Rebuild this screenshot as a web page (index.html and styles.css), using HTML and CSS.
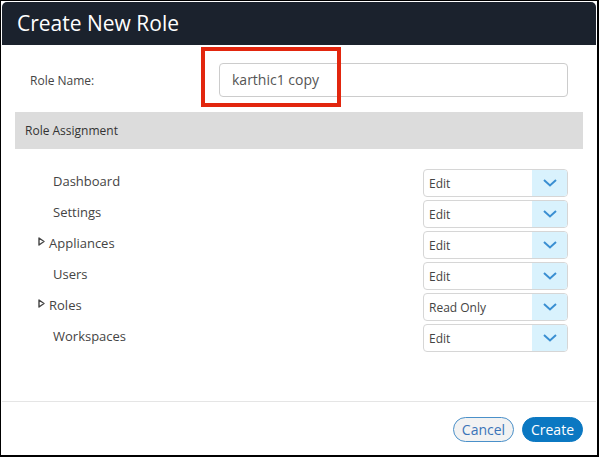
FILE: index.html
```html
<!DOCTYPE html>
<html>
<head>
<meta charset="utf-8">
<link rel="stylesheet" href="styles.css">
</head>
<body>
<div class="frame">
  <div class="header">Create New Role</div>
  <div class="main">
    <div class="name-row">
      <label class="name-label">Role Name:</label>
      <div class="name-input">karthic1 copy</div>
    </div>
    <div class="section-bar">Role Assignment</div>
    <div class="rows">
      <div class="row"><span class="label plain">Dashboard</span><div class="select"><span class="val">Edit</span><span class="btn"><svg width="14" height="8" viewBox="0 0 14 8"><path d="M1 1 L7 6.5 L13 1" fill="none" stroke="#3a8fd2" stroke-width="2"/></svg></span></div></div>
      <div class="row"><span class="label plain">Settings</span><div class="select"><span class="val">Edit</span><span class="btn"><svg width="14" height="8" viewBox="0 0 14 8"><path d="M1 1 L7 6.5 L13 1" fill="none" stroke="#3a8fd2" stroke-width="2"/></svg></span></div></div>
      <div class="row"><span class="label"><svg class="tri" width="7" height="9" viewBox="0 0 7 9"><path d="M1 1 L6 4.5 L1 8 Z" fill="#fff" stroke="#444" stroke-width="1.4" stroke-linejoin="round"/></svg>Appliances</span><div class="select"><span class="val">Edit</span><span class="btn"><svg width="14" height="8" viewBox="0 0 14 8"><path d="M1 1 L7 6.5 L13 1" fill="none" stroke="#3a8fd2" stroke-width="2"/></svg></span></div></div>
      <div class="row"><span class="label plain">Users</span><div class="select"><span class="val">Edit</span><span class="btn"><svg width="14" height="8" viewBox="0 0 14 8"><path d="M1 1 L7 6.5 L13 1" fill="none" stroke="#3a8fd2" stroke-width="2"/></svg></span></div></div>
      <div class="row"><span class="label"><svg class="tri" width="7" height="9" viewBox="0 0 7 9"><path d="M1 1 L6 4.5 L1 8 Z" fill="#fff" stroke="#444" stroke-width="1.4" stroke-linejoin="round"/></svg>Roles</span><div class="select"><span class="val">Read Only</span><span class="btn"><svg width="14" height="8" viewBox="0 0 14 8"><path d="M1 1 L7 6.5 L13 1" fill="none" stroke="#3a8fd2" stroke-width="2"/></svg></span></div></div>
      <div class="row"><span class="label plain">Workspaces</span><div class="select"><span class="val">Edit</span><span class="btn"><svg width="14" height="8" viewBox="0 0 14 8"><path d="M1 1 L7 6.5 L13 1" fill="none" stroke="#3a8fd2" stroke-width="2"/></svg></span></div></div>
    </div>
  </div>
  <div class="footer">
    <button class="b-cancel">Cancel</button>
    <button class="b-create">Create</button>
  </div>
  <div class="highlight"></div>
</div>
</body>
</html>
```
FILE: styles.css
```css
html, body {
  margin: 0;
  padding: 0;
  background: #fff;
}
body {
  font-family: "Open Sans", "Liberation Sans", sans-serif;
}
.frame {
  position: relative;
  box-sizing: border-box;
  width: 599px;
  height: 457px;
  border-style: solid;
  border-color: #000;
  border-width: 1px 2px 2px 1px;
  padding: 1px 1px 0 1px;
  display: flex;
  flex-direction: column;
  background: #fff;
}
.header {
  height: 43px;
  line-height: 43px;
  background: #1b222d;
  color: #fff;
  font-size: 21px;
  padding-left: 15px;
  border-radius: 5px 5px 0 0;
}
.main {
  flex: 1;
  display: flex;
  flex-direction: column;
}
.name-row {
  display: flex;
  align-items: center;
  margin: 18px 13px 0 13px;
  padding: 0 15px;
}
.name-label {
  width: 189px;
  font-size: 12px;
  color: #444;
}
.name-input {
  flex: 1;
  box-sizing: border-box;
  height: 34px;
  border: 1px solid #ccc;
  border-radius: 4px;
  padding-left: 12px;
  font-size: 14px;
  line-height: 32px;
  color: #555;
}
.section-bar {
  margin: 15px 13px 0 13px;
  height: 37px;
  line-height: 37px;
  background: #dcdcdc;
  padding-left: 10px;
  font-size: 12px;
  color: #333;
}
.rows {
  margin: 20px 13px 0 13px;
  padding: 0 15px 0 23px;
  display: flex;
  flex-direction: column;
  gap: 3px;
}
.row {
  display: flex;
  align-items: center;
  justify-content: space-between;
  height: 28px;
}
.label {
  display: flex;
  align-items: center;
  font-size: 13px;
  color: #444;
  margin-bottom: 4px;
}
.label.plain {
  padding-left: 15px;
}
.tri {
  margin-right: 4px;
  margin-top: -3px;
}
.select {
  box-sizing: border-box;
  width: 145px;
  height: 28px;
  border: 1px solid #d6d6d6;
  border-radius: 4px;
  display: flex;
  overflow: hidden;
}
.val {
  flex: 1;
  padding-left: 5px;
  font-size: 12px;
  line-height: 27px;
  color: #444;
}
.btn {
  width: 35px;
  background: #d9f2fd;
  display: flex;
  align-items: center;
  justify-content: center;
}
.footer {
  border-top: 1px solid #e5e5e5;
  display: flex;
  justify-content: flex-end;
  gap: 8px;
  padding: 15px 13px 13px 0;
}
.footer button {
  font-family: "Open Sans", "Liberation Sans", sans-serif;
  font-size: 14px;
  height: 25px;
  width: 61px;
  border-radius: 13px;
  padding: 0;
  line-height: 22px;
  cursor: pointer;
}
.b-cancel {
  background: #f2f2f2;
  border: 1px solid #4a90c9;
  color: #3b74b8;
}
.b-create {
  background: #0b78c2;
  border: 1px solid #0b78c2;
  color: #fff;
}
.highlight {
  position: absolute;
  left: 200px;
  top: 46px;
  width: 140px;
  height: 60px;
  box-sizing: border-box;
  border: 4px solid #e2260e;
}
```
